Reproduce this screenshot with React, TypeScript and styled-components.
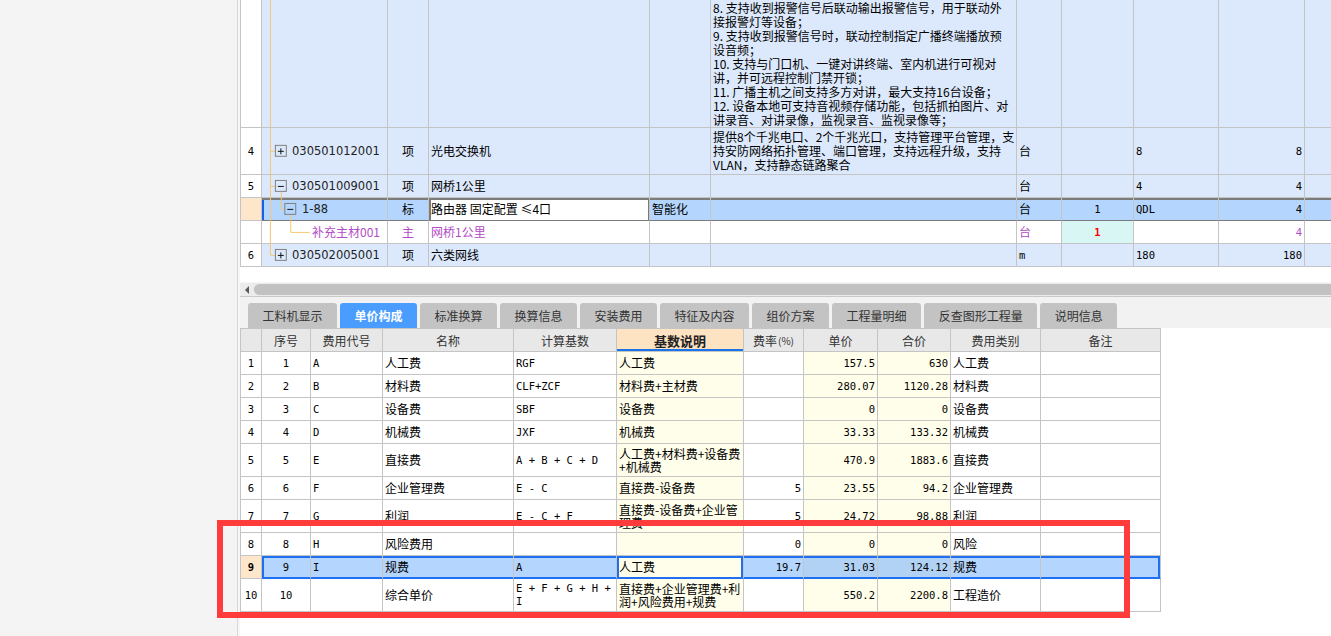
import React from 'react';
import styled, { createGlobalStyle, css } from 'styled-components';

const CJK = `"Noto Sans CJK SC", "Noto Sans", sans-serif`;
const MONO = `"DejaVu Sans Mono", "Liberation Mono", "Noto Sans CJK SC", monospace`;
const CODE = `"DejaVu Sans", "Noto Sans CJK SC", sans-serif`;

const LINE = '#c4c4c4';
const ROW_BLUE = '#dce9fc';
const SEL_BLUE = '#b4d5fd';
const PEACH = '#fde6ca';
const YELLOW = '#fffeea';
const PURPLE = '#b24bc6';
const ORANGE = '#f9c66e';
const FOCUS = '#1e6ff1';
const DARK = '#7b7b7b';

const GlobalStyle = createGlobalStyle`
  html, body { margin: 0; padding: 0; background: #fff; }
  body { font-family: ${CJK}; font-size: 12px; color: #000; overflow: hidden; }
  *, *::before, *::after { box-sizing: border-box; }
`;

const Page = styled.div`
  position: relative;
  display: flex;
  width: 1331px;
  height: 636px;
  overflow: hidden;
  background: #fff;
`;

const SidePanel = styled.aside`
  flex: none;
  width: 238px;
  background: #f4f4f4;
  border-right: 1px solid #d8d8d8;
`;

const Main = styled.main`
  flex: 1;
  min-width: 0;
  display: flex;
  flex-direction: column;
  border-left: 2px solid #f6f6f6;
  overflow: hidden;
`;

/* ---------- top grid ---------- */

const TOP_COLS = [21, 126, 41, 221, 61, 306, 45, 72, 85, 86, 120];
const BOT_COLS = [21, 49, 72, 131, 103, 127, 60, 74, 73, 90, 120];
const cols = (a: number[]) => a.map((w) => `${w}px`).join(' ');

const TopArea = styled.section`
  flex: none;
  height: 282px;
  padding-bottom: 15px;
  display: flex;
  flex-direction: column;
  justify-content: flex-end;
  overflow: hidden;
  background: #fff;
`;

const TopGrid = styled.div`
  display: flex;
  flex-direction: column;
  width: max-content;
  border-left: 1px solid ${LINE};
`;

const TopRow = styled.div<{ $h: number; $bg: string }>`
  display: grid;
  grid-template-columns: ${cols(TOP_COLS)};
  height: ${(p) => p.$h}px;
  background: ${(p) => p.$bg};
`;

type Align = 'left' | 'center' | 'right';
type Font = 'cjk' | 'mono' | 'code';

const fontOf = (f?: Font) =>
  f === 'mono'
    ? css`
        font-family: ${MONO};
        font-size: 10.5px;
      `
    : f === 'code'
      ? css`
          font-family: ${CODE};
          font-size: 11.5px;
        `
      : css`
          font-family: ${CJK};
          font-size: 12px;
        `;

const Cell = styled.div<{
  $align?: Align;
  $font?: Font;
  $color?: string;
  $bg?: string;
  $ring?: string;
  $edge?: string;
  $bold?: boolean;
  $indent?: number;
}>`
  position: relative;
  display: flex;
  align-items: center;
  justify-content: ${(p) => (p.$align === 'center' ? 'center' : p.$align === 'right' ? 'flex-end' : 'flex-start')};
  min-width: 0;
  padding: 0 2px 0 ${(p) => (p.$indent ?? 2)}px;
  border-right: 1px solid ${LINE};
  border-bottom: 1px solid ${(p) => p.$edge ?? LINE};
  background: ${(p) => p.$bg ?? 'transparent'};
  white-space: nowrap;
  line-height: 14px;
  ${(p) => fontOf(p.$font)}
  color: ${(p) => p.$color ?? '#000'};
  font-weight: ${(p) => (p.$bold ? 700 : 400)};
  box-shadow: ${(p) => p.$ring ?? 'none'};
`;

const Lines = styled.div<{ $lh?: number }>`
  display: flex;
  flex-direction: column;
  line-height: ${(p) => p.$lh ?? 14}px;
  white-space: pre;
`;

const TreeSvg = styled.svg`
  position: absolute;
  left: 0;
  top: 0;
  width: 100%;
  height: calc(100% + 1px);
  overflow: visible;
  pointer-events: none;
`;

type TreeKind = 'trunk' | 'l0plus' | 'l0minus' | 'l1minus' | 'l2leaf' | 'l0plusLast';

const TreeBox = ({ x, c, sign }: { x: number; c: number; sign: 'plus' | 'minus' }) => (
  <g>
    <rect x={x + 0.5} y={c - 5.5} width={11} height={11} fill="none" stroke="#7f7f7f" />
    <line x1={x + 3} x2={x + 9} y1={c + 0.5} y2={c + 0.5} stroke="#111" />
    {sign === 'plus' && <line x1={x + 6} x2={x + 6} y1={c - 2.5} y2={c + 3.5} stroke="#111" />}
  </g>
);

const Tree = ({ kind, h }: { kind: TreeKind; h: number }) => {
  const c = Math.floor((h - 1) / 2);
  const T = 8.5;
  const L0 = 19.5;
  const L1 = 28.5;
  return (
    <TreeSvg viewBox={`0 0 126 ${h}`} preserveAspectRatio="xMinYMin" width={126} height={h}>
      <line x1={T} x2={T} y1={0} y2={kind === 'l0plusLast' ? c + 0.5 : h} stroke={ORANGE} />
      {(kind === 'l0plus' || kind === 'l0minus' || kind === 'l0plusLast') && (
        <>
          <line x1={T} x2={13.5} y1={c + 0.5} y2={c + 0.5} stroke={ORANGE} />
          <TreeBox x={13} c={c} sign={kind === 'l0minus' ? 'minus' : 'plus'} />
          {kind === 'l0minus' && <line x1={L0} x2={L0} y1={c + 6} y2={h} stroke={ORANGE} />}
        </>
      )}
      {kind === 'l1minus' && (
        <>
          <line x1={L0} x2={L0} y1={0} y2={c + 0.5} stroke={ORANGE} />
          <line x1={L0} x2={23} y1={c + 0.5} y2={c + 0.5} stroke={ORANGE} />
          <TreeBox x={22.5} c={c} sign="minus" />
          <line x1={L1 + 0.5} x2={L1 + 0.5} y1={c + 6} y2={h} stroke={ORANGE} />
        </>
      )}
      {kind === 'l2leaf' && (
        <>
          <line x1={L1 + 0.5} x2={L1 + 0.5} y1={0} y2={c + 0.5} stroke={ORANGE} />
          <line x1={L1 + 0.5} x2={48} y1={c + 0.5} y2={c + 0.5} stroke={ORANGE} />
        </>
      )}
    </TreeSvg>
  );
};

const TopRowNum = styled(Cell)`
  justify-content: center;
  padding: 0;
`;

const CodeText = styled.span`
  position: relative;
`;

const ROW3_LINES = [
  '8. 支持收到报警信号后联动输出报警信号，用于联动外',
  '接报警灯等设备；',
  '9. 支持收到报警信号时，联动控制指定广播终端播放预',
  '设音频；',
  '10. 支持与门口机、一键对讲终端、室内机进行可视对',
  '讲，并可远程控制门禁开锁；',
  '11. 广播主机之间支持多方对讲，最大支持16台设备；',
  '12. 设备本地可支持音视频存储功能，包括抓拍图片、对',
  '讲录音、对讲录像，监视录音、监视录像等；',
];

const ROW4_LINES = [
  '提供8个千兆电口、2个千兆光口，支持管理平台管理，支',
  '持安防网络拓扑管理、端口管理，支持远程升级，支持',
  'VLAN，支持静态链路聚合',
];

const ROW_RING = `inset 0 2px 0 ${DARK}`;
const EDIT_RING = `inset 0 2px 0 ${DARK}, inset 2px 0 0 ${DARK}, inset -1px 0 0 ${DARK}`;

const TopTable = () => (
  <TopGrid>
    {/* row 3 (partially scrolled) */}
    <TopRow $h={128} $bg={ROW_BLUE}>
      <TopRowNum $bg="#fff" />
      <Cell>
        <Tree kind="trunk" h={128} />
      </Cell>
      <Cell />
      <Cell />
      <Cell />
      <Cell>
        <Lines>
          {ROW3_LINES.map((l) => (
            <span key={l}>{l}</span>
          ))}
        </Lines>
      </Cell>
      <Cell />
      <Cell />
      <Cell />
      <Cell />
      <Cell />
    </TopRow>

    {/* row 4 */}
    <TopRow $h={47} $bg={ROW_BLUE}>
      <TopRowNum $bg="#fff" $font="mono">4</TopRowNum>
      <Cell $font="code" $indent={30} $color="#222">
        <Tree kind="l0plus" h={47} />
        <CodeText>030501012001</CodeText>
      </Cell>
      <Cell $align="center">项</Cell>
      <Cell>光电交换机</Cell>
      <Cell />
      <Cell>
        <Lines>
          {ROW4_LINES.map((l) => (
            <span key={l}>{l}</span>
          ))}
        </Lines>
      </Cell>
      <Cell>台</Cell>
      <Cell />
      <Cell $font="mono">8</Cell>
      <Cell $font="mono" $align="right">8</Cell>
      <Cell />
    </TopRow>

    {/* row 5 */}
    <TopRow $h={23} $bg={ROW_BLUE}>
      <TopRowNum $bg="#fff" $font="mono">5</TopRowNum>
      <Cell $font="code" $indent={30} $color="#222">
        <Tree kind="l0minus" h={23} />
        <CodeText>030501009001</CodeText>
      </Cell>
      <Cell $align="center">项</Cell>
      <Cell>网桥1公里</Cell>
      <Cell />
      <Cell />
      <Cell>台</Cell>
      <Cell />
      <Cell $font="mono">4</Cell>
      <Cell $font="mono" $align="right">4</Cell>
      <Cell />
    </TopRow>

    {/* row 1-88 (selected) */}
    <TopRow $h={23} $bg={SEL_BLUE}>
      <TopRowNum $bg={PEACH} />
      <Cell $font="code" $indent={40} $color="#222" $edge={DARK} $ring={`${ROW_RING}, inset 2px 0 0 #1560e6`}>
        <Tree kind="l1minus" h={23} />
        <CodeText>1-88</CodeText>
      </Cell>
      <Cell $align="center" $edge={DARK} $ring={ROW_RING}>标</Cell>
      <Cell $bg="#fff" $edge={DARK} $ring={EDIT_RING}>路由器 固定配置 ≤4口</Cell>
      <Cell $edge={DARK} $ring={ROW_RING}>智能化</Cell>
      <Cell $edge={DARK} $ring={ROW_RING} />
      <Cell $edge={DARK} $ring={ROW_RING}>台</Cell>
      <Cell $font="mono" $align="center" $edge={DARK} $ring={ROW_RING}>1</Cell>
      <Cell $font="mono" $edge={DARK} $ring={ROW_RING}>QDL</Cell>
      <Cell $font="mono" $align="right" $edge={DARK} $ring={ROW_RING}>4</Cell>
      <Cell $edge={DARK} $ring={ROW_RING} />
    </TopRow>

    {/* main material row */}
    <TopRow $h={23} $bg="#fff">
      <TopRowNum />
      <Cell $indent={50} $color={PURPLE}>
        <Tree kind="l2leaf" h={23} />
        <CodeText>补充主材001</CodeText>
      </Cell>
      <Cell $align="center" $color={PURPLE}>主</Cell>
      <Cell $color={PURPLE}>网桥1公里</Cell>
      <Cell />
      <Cell />
      <Cell $color={PURPLE}>台</Cell>
      <Cell $font="mono" $align="center" $bg="#d8f6f4" $color="#f00" $bold>1</Cell>
      <Cell />
      <Cell $font="mono" $align="right" $color={PURPLE}>4</Cell>
      <Cell />
    </TopRow>

    {/* row 6 */}
    <TopRow $h={23} $bg={ROW_BLUE}>
      <TopRowNum $bg="#fff" $font="mono">6</TopRowNum>
      <Cell $font="code" $indent={30} $color="#222">
        <Tree kind="l0plusLast" h={23} />
        <CodeText>030502005001</CodeText>
      </Cell>
      <Cell $align="center">项</Cell>
      <Cell>六类网线</Cell>
      <Cell />
      <Cell />
      <Cell $font="mono">m</Cell>
      <Cell />
      <Cell $font="mono">180</Cell>
      <Cell $font="mono" $align="right">180</Cell>
      <Cell />
    </TopRow>
  </TopGrid>
);

/* ---------- scrollbar & tabs ---------- */

const HScroll = styled.div`
  flex: none;
  height: 15px;
  display: flex;
  align-items: center;
  gap: 5px;
  padding-left: 5px;
  background: #ececec;
  border-top: 1px solid #f6f6f6;
  border-bottom: 1px solid #c9c9c9;
`;

const ScrollArrow = styled.span`
  width: 0;
  height: 0;
  border-top: 4px solid transparent;
  border-bottom: 4px solid transparent;
  border-right: 4px solid #5a5a5a;
`;

const ScrollThumb = styled.div`
  flex: 1;
  height: 11px;
  margin-right: -12px;
  border-radius: 6px;
  background: #c2c2c2;
`;

const TabStrip = styled.nav`
  flex: none;
  height: 31px;
  display: flex;
  align-items: flex-end;
  gap: 3px;
  padding-left: 8px;
  background: #f2f2f2;
`;

const Tab = styled.div<{ $active?: boolean }>`
  height: 25px;
  display: flex;
  align-items: center;
  padding: 0 14.5px;
  border-radius: 3px 3px 0 0;
  background: ${(p) => (p.$active ? '#4a9cff' : '#c3c3c3')};
  color: ${(p) => (p.$active ? '#fff' : '#333')};
  font-family: ${CJK};
  font-size: 12px;
  font-weight: ${(p) => (p.$active ? 700 : 400)};
  white-space: nowrap;
`;

const TABS = ['工料机显示', '单价构成', '标准换算', '换算信息', '安装费用', '特征及内容', '组价方案', '工程量明细', '反查图形工程量', '说明信息'];

/* ---------- bottom grid ---------- */

const BotGrid = styled.div`
  display: flex;
  flex-direction: column;
  width: max-content;
  border-left: 1px solid ${LINE};
  border-top: 1px solid ${LINE};
`;

const BotRow = styled.div<{ $h: number }>`
  display: grid;
  grid-template-columns: ${cols(BOT_COLS)};
  height: ${(p) => p.$h}px;
  background: #fff;
`;

const HeadCell = styled.div<{ $sorted?: boolean }>`
  display: flex;
  align-items: center;
  justify-content: center;
  border-right: 1px solid ${LINE};
  border-bottom: 1px solid ${LINE};
  background: ${(p) => (p.$sorted ? '#fee3c3' : '#e8e8e8')};
  color: ${(p) => (p.$sorted ? '#222' : '#333')};
  font-family: ${CJK};
  font-size: ${(p) => (p.$sorted ? 13 : 12)}px;
  font-weight: ${(p) => (p.$sorted ? 700 : 400)};
  box-shadow: ${(p) => (p.$sorted ? `inset 0 -2px 0 #1a73e8` : 'none')};
`;

const Small = styled.span`
  font-size: 10px;
  margin-left: 1px;
`;

type BRow = {
  n: number;
  code: string;
  name: string;
  base: string[];
  desc: string[];
  rate: string;
  price: string;
  total: string;
  cat: string;
  tall?: boolean;
  sel?: boolean;
};

const BOT_ROWS: BRow[] = [
  { n: 1, code: 'A', name: '人工费', base: ['RGF'], desc: ['人工费'], rate: '', price: '157.5', total: '630', cat: '人工费' },
  { n: 2, code: 'B', name: '材料费', base: ['CLF+ZCF'], desc: ['材料费+主材费'], rate: '', price: '280.07', total: '1120.28', cat: '材料费' },
  { n: 3, code: 'C', name: '设备费', base: ['SBF'], desc: ['设备费'], rate: '', price: '0', total: '0', cat: '设备费' },
  { n: 4, code: 'D', name: '机械费', base: ['JXF'], desc: ['机械费'], rate: '', price: '33.33', total: '133.32', cat: '机械费' },
  { n: 5, code: 'E', name: '直接费', base: ['A + B + C + D'], desc: ['人工费+材料费+设备费', '+机械费'], rate: '', price: '470.9', total: '1883.6', cat: '直接费', tall: true },
  { n: 6, code: 'F', name: '企业管理费', base: ['E - C'], desc: ['直接费-设备费'], rate: '5', price: '23.55', total: '94.2', cat: '企业管理费' },
  { n: 7, code: 'G', name: '利润', base: ['E - C + F'], desc: ['直接费-设备费+企业管', '理费'], rate: '5', price: '24.72', total: '98.88', cat: '利润', tall: true },
  { n: 8, code: 'H', name: '风险费用', base: [''], desc: [''], rate: '0', price: '0', total: '0', cat: '风险' },
  { n: 9, code: 'I', name: '规费', base: ['A'], desc: ['人工费'], rate: '19.7', price: '31.03', total: '124.12', cat: '规费', sel: true },
  { n: 10, code: '', name: '综合单价', base: ['E + F + G + H +', 'I'], desc: ['直接费+企业管理费+利', '润+风险费用+规费'], rate: '', price: '550.2', total: '2200.8', cat: '工程造价', tall: true },
];

const SEL_TB = `inset 0 2px 0 ${FOCUS}, inset 0 -1px 0 ${FOCUS}`;
const SEL_L = `${SEL_TB}, inset 2px 0 0 ${FOCUS}`;
const SEL_R = `${SEL_TB}, inset -2px 0 0 ${FOCUS}`;
const SEL_ALL = `${SEL_TB}, inset 2px 0 0 ${FOCUS}, inset -2px 0 0 ${FOCUS}`;

const BotBody = ({ r }: { r: BRow }) => {
  const s = r.sel;
  const edge = s ? FOCUS : undefined;
  const bg = s ? SEL_BLUE : undefined;
  const multi = (arr: string[]) =>
    arr.length > 1 ? (
      <Lines $lh={13}>
        {arr.map((l) => (
          <span key={l}>{l}</span>
        ))}
      </Lines>
    ) : (
      arr[0]
    );
  return (
    <BotRow $h={r.tall ? 33 : 23}>
      <Cell $font="mono" $align="center" $bg={s ? PEACH : undefined} $bold={s}>
        {r.n}
      </Cell>
      <Cell $font="mono" $align="center" $bg={bg} $edge={edge} $ring={s ? SEL_L : undefined}>
        {r.n}
      </Cell>
      <Cell $font="mono" $bg={bg} $edge={edge} $ring={s ? SEL_TB : undefined}>
        {r.code}
      </Cell>
      <Cell $bg={bg} $edge={edge} $ring={s ? SEL_TB : undefined}>
        {r.name}
      </Cell>
      <Cell $font="mono" $bg={bg} $edge={edge} $ring={s ? SEL_TB : undefined}>
        {multi(r.base)}
      </Cell>
      <Cell $bg={YELLOW} $edge={edge} $ring={s ? SEL_ALL : undefined}>
        {multi(r.desc)}
      </Cell>
      <Cell $font="mono" $align="right" $bg={bg} $edge={edge} $ring={s ? SEL_TB : undefined}>
        {r.rate}
      </Cell>
      <Cell $font="mono" $align="right" $bg={s ? '#b1d2f4' : YELLOW} $edge={edge} $ring={s ? SEL_TB : undefined}>
        {r.price}
      </Cell>
      <Cell $font="mono" $align="right" $bg={s ? '#b1d2f4' : YELLOW} $edge={edge} $ring={s ? SEL_TB : undefined}>
        {r.total}
      </Cell>
      <Cell $bg={bg} $edge={edge} $ring={s ? SEL_TB : undefined}>
        {r.cat}
      </Cell>
      <Cell $bg={bg} $edge={edge} $ring={s ? SEL_R : undefined} />
    </BotRow>
  );
};

const BotTable = () => (
  <BotGrid>
    <BotRow $h={23}>
      <HeadCell />
      <HeadCell>序号</HeadCell>
      <HeadCell>费用代号</HeadCell>
      <HeadCell>名称</HeadCell>
      <HeadCell>计算基数</HeadCell>
      <HeadCell $sorted>基数说明</HeadCell>
      <HeadCell>
        费率<Small>(%)</Small>
      </HeadCell>
      <HeadCell>单价</HeadCell>
      <HeadCell>合价</HeadCell>
      <HeadCell>费用类别</HeadCell>
      <HeadCell>备注</HeadCell>
    </BotRow>
    {BOT_ROWS.map((r) => (
      <BotBody key={r.n} r={r} />
    ))}
  </BotGrid>
);

/* ---------- annotation ---------- */

const Highlight = styled.div`
  position: absolute;
  left: 217px;
  top: 520px;
  width: 913px;
  height: 98px;
  border: 6px solid #ff3b3b;
  pointer-events: none;
`;

export default function App() {
  return (
    <>
      <GlobalStyle />
      <Page>
        <SidePanel />
        <Main>
          <TopArea>
            <TopTable />
          </TopArea>
          <HScroll>
            <ScrollArrow />
            <ScrollThumb />
          </HScroll>
          <TabStrip>
            {TABS.map((t) => (
              <Tab key={t} $active={t === '单价构成'}>
                {t}
              </Tab>
            ))}
          </TabStrip>
          <BotTable />
        </Main>
        <Highlight />
      </Page>
    </>
  );
}
